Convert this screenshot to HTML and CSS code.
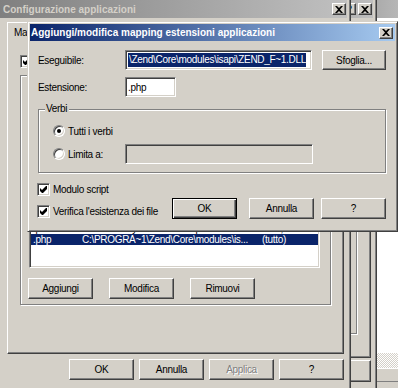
FILE: index.html
```html
<!DOCTYPE html>
<html lang="it">
<head>
  <meta charset="UTF-8">
  <title>Configurazione applicazioni</title>
  <link rel="stylesheet" href="styles.css">
</head>
<body>
<div class="desk">

  <!-- console IIS dietro a tutto -->
  <div class="win win-c">
    <div class="cap off"><span class="cap-title">Gestione IIS</span></div>
    <div class="c-client"></div>
    <div class="c-scroll"></div>
    <div class="c-status"></div>
  </div>

  <!-- proprieta del sito -->
  <div class="win win-b">
    <div class="cap off">
      <span class="cap-title">Proprietà</span>
      <button class="cbtn">?</button>
      <button class="cbtn"><svg width="8" height="7" viewBox="0 0 8 7"><path d="M0 0h2l2 2 2-2h2L5 3.5 8 7H6L4 5 2 7H0l3-3.5z"/></svg></button>
    </div>
    <div class="b-body">
      <div class="page b-page"><div class="group b-group"></div></div>
      <div class="b-foot"><button class="btn">OK</button></div>
    </div>
  </div>

  <!-- configurazione applicazioni -->
  <div class="win win-main">
    <div class="cap off">
      <span class="cap-title">Configurazione applicazioni</span>
      <button class="cbtn"><svg width="8" height="7" viewBox="0 0 8 7"><path d="M0 0h2l2 2 2-2h2L5 3.5 8 7H6L4 5 2 7H0l3-3.5z"/></svg></button>
    </div>
    <div class="main-body">
      <div class="tabs"><div class="tab">Mapping</div></div>
      <div class="page main-page">
        <label class="chk-row">
          <span class="chk"><svg width="7" height="7" viewBox="0 0 7 7"><path d="M0 2l2 2 4-4h1v3L3 7H2L0 5z"/></svg></span>
          Memorizza nella cache le estensioni ISAPI
        </label>
        <div class="group map-group">
          <span class="group-label">Mapping estensioni applicazioni</span>
          <div class="list">
            <div class="lhead">
              <span class="c1">Estensione</span>
              <span class="c2">Percorso eseguibile</span>
              <span class="c3">Verbi</span>
            </div>
            <div class="row"><span class="c1">.asa</span><span class="c2">C:\WINNT\System32\inetsrv\asp.dll</span><span class="c3">GET,HEAD,POST,TRACE</span></div>
            <div class="row"><span class="c1">.asp</span><span class="c2">C:\WINNT\System32\inetsrv\asp.dll</span><span class="c3">GET,HEAD,POST,TRACE</span></div>
            <div class="row"><span class="c1">.cdx</span><span class="c2">C:\WINNT\System32\inetsrv\asp.dll</span><span class="c3">GET,HEAD,POST,TRACE</span></div>
            <div class="row"><span class="c1">.cer</span><span class="c2">C:\WINNT\System32\inetsrv\asp.dll</span><span class="c3">GET,HEAD,POST,TRACE</span></div>
            <div class="row"><span class="c1">.htr</span><span class="c2">C:\WINNT\System32\inetsrv\ism.dll</span><span class="c3">GET,POST</span></div>
            <div class="row"><span class="c1">.idc</span><span class="c2">C:\WINNT\System32\inetsrv\httpodbc.dll</span><span class="c3">OPTIONS,GET,HEAD</span></div>
            <div class="row"><span class="c1">.shtm</span><span class="c2">C:\WINNT\System32\inetsrv\ssinc.dll</span><span class="c3">GET,POST</span></div>
            <div class="row"><span class="c1">.shtml</span><span class="c2">C:\WINNT\System32\inetsrv\ssinc.dll</span><span class="c3">GET,POST</span></div>
            <div class="row"><span class="c1">.stm</span><span class="c2">C:\WINNT\System32\inetsrv\ssinc.dll</span><span class="c3">GET,POST</span></div>
            <div class="row"><span class="c1">.printer</span><span class="c2">C:\WINNT\system32\msw3prt.dll</span><span class="c3">GET,POST</span></div>
            <div class="row sel"><span class="c1">.php</span><span class="c2">C:\PROGRA~1\Zend\Core\modules\is...</span><span class="c3">(tutto)</span></div>
          </div>
          <div class="list-btns">
            <button class="btn">Aggiungi</button>
            <button class="btn">Modifica</button>
            <button class="btn">Rimuovi</button>
          </div>
        </div>
      </div>
      <div class="main-foot">
        <button class="btn">OK</button>
        <button class="btn">Annulla</button>
        <button class="btn" disabled>Applica</button>
        <button class="btn">?</button>
      </div>
    </div>
  </div>

  <!-- finestra modale -->
  <div class="win dlg">
    <div class="cap">
      <span class="cap-title">Aggiungi/modifica mapping estensioni applicazioni</span>
      <button class="cbtn"><svg width="8" height="7" viewBox="0 0 8 7"><path d="M0 0h2l2 2 2-2h2L5 3.5 8 7H6L4 5 2 7H0l3-3.5z"/></svg></button>
    </div>
    <div class="dlg-body">
      <div class="frow">
        <span class="flabel">Eseguibile:</span>
        <div class="edit edit-exe"><span class="picked">\Zend\Core\modules\isapi\ZEND_F~1.DLL</span></div>
        <button class="btn btn-browse">Sfoglia...</button>
      </div>
      <div class="frow">
        <span class="flabel">Estensione:</span>
        <div class="edit edit-ext">.php</div>
      </div>
      <div class="group verbi">
        <span class="group-label">Verbi</span>
        <label class="opt"><span class="radio on"></span>Tutti i verbi</label>
        <label class="opt"><span class="radio"></span><span class="opt-limit">Limita a:</span><div class="edit off edit-verbs"></div></label>
      </div>
      <label class="chk-row dlg-chk">
        <span class="chk"><svg width="7" height="7" viewBox="0 0 7 7"><path d="M0 2l2 2 4-4h1v3L3 7H2L0 5z"/></svg></span>
        Modulo script
      </label>
      <div class="dlg-foot">
        <label class="chk-row dlg-chk">
          <span class="chk"><svg width="7" height="7" viewBox="0 0 7 7"><path d="M0 2l2 2 4-4h1v3L3 7H2L0 5z"/></svg></span>
          Verifica l'esistenza dei file
        </label>
        <button class="btn def ok">OK</button>
        <button class="btn cancel">Annulla</button>
        <button class="btn help">?</button>
      </div>
    </div>
  </div>

</div>
</body>
</html>
```

FILE: styles.css
```css
* {
  box-sizing: border-box;
}
body {
  margin: 0;
  font-family: "Liberation Sans", Arial, sans-serif;
  font-size: 10px;
  letter-spacing: -0.3px;
  color: #000;
  background: #fff;
}
.desk {
  position: relative;
  width: 398px;
  height: 388px;
  overflow: hidden;
  background: #fff;
}

/* finestre stile classico */
.win {
  position: absolute;
  display: flex;
  flex-direction: column;
  padding: 3px;
  background: #d4d0c8;
  border: 1px solid;
  border-color: #d4d0c8 #404040 #404040 #d4d0c8;
  box-shadow: inset 1px 1px #fff, inset -1px -1px #808080;
}
.win-c { z-index: 1; left: 290px; top: -4px; width: 130px; height: 420px; }
.win-b { z-index: 2; left: 250px; top: -4px; width: 127px; height: 420px; }
.win-main { z-index: 3; left: -4px; top: -4px; width: 355px; height: 420px; }
.dlg { z-index: 4; left: 27px; top: 21px; width: 371px; height: 211px; padding: 2px; }

.cap {
  flex: none;
  display: flex;
  align-items: center;
  gap: 2px;
  height: 18px;
  padding: 0 1px 0 3px;
  color: #fff;
  font-weight: bold;
  letter-spacing: 0;
  background: linear-gradient(to right, #0a246a, #a6caf0);
}
.cap.off {
  color: #d4d0c8;
  background: linear-gradient(to right, #808080, #c0c0c0);
}
.dlg .cap {
  height: 17px;
  padding: 0 2px 0 1px;
}
.cap-title {
  flex: 1;
  overflow: hidden;
  white-space: nowrap;
}
.cbtn {
  flex: none;
  display: flex;
  align-items: center;
  justify-content: center;
  width: 14px;
  height: 12px;
  padding: 0;
  font: bold 10px "Liberation Sans", Arial, sans-serif;
  color: #000;
  background: #d4d0c8;
  border: 1px solid;
  border-color: #fff #404040 #404040 #fff;
  box-shadow: inset -1px -1px #808080;
}

/* controlli */
.btn {
  flex: none;
  width: 65px;
  height: 21px;
  padding: 0;
  font: inherit;
  letter-spacing: inherit;
  color: #000;
  background: #d4d0c8;
  border: 1px solid;
  border-color: #fff #404040 #404040 #fff;
  box-shadow: inset -1px -1px #808080, inset 1px 1px #d4d0c8;
}
.btn.def {
  border-color: #000;
  box-shadow: inset 1px 1px #fff, inset -1px -1px #404040, inset -2px -2px #808080;
}
.btn:disabled {
  color: #808080;
  text-shadow: 1px 1px #fff;
}
.edit {
  display: flex;
  align-items: center;
  height: 20px;
  padding: 0 2px;
  overflow: hidden;
  white-space: nowrap;
  background: #fff;
  border: 1px solid;
  border-color: #808080 #fff #fff #808080;
  box-shadow: inset 1px 1px #404040, inset -1px -1px #d4d0c8;
}
.edit.off {
  background: #d4d0c8;
}
.picked {
  padding: 1px 0 2px 1px;
  color: #fff;
  background: #0a246a;
}
.group {
  position: relative;
  border: 1px solid #808080;
  box-shadow: inset 1px 1px #fff, 1px 1px #fff;
}
.group-label {
  position: absolute;
  top: -7px;
  left: 6px;
  padding: 0 2px 0 1px;
  background: #d4d0c8;
}
.chk-row {
  display: flex;
  align-items: center;
  gap: 3px;
  height: 14px;
  white-space: nowrap;
}
.chk {
  flex: none;
  width: 13px;
  height: 13px;
  padding: 2px;
  background: #fff;
  border: 1px solid;
  border-color: #808080 #fff #fff #808080;
  box-shadow: inset 1px 1px #404040, inset -1px -1px #d4d0c8;
}
.chk svg {
  display: block;
}
.radio {
  position: relative;
  flex: none;
  width: 12px;
  height: 12px;
  border-radius: 50%;
  background: #fff;
  border: 1px solid;
  border-color: #808080 #fff #fff #808080;
  box-shadow: inset 1px 1px #404040, inset -1px -1px #d4d0c8;
}
.radio.on::after {
  content: "";
  position: absolute;
  left: 3px;
  top: 3px;
  width: 4px;
  height: 4px;
  border-radius: 50%;
  background: #000;
}

/* finestra console */
.c-client {
  flex: none;
  height: 335px;
  background: #fff;
}
.c-scroll {
  flex: none;
  height: 15px;
  background: repeating-conic-gradient(#fff 0 25%, #d4d0c8 0 50%) 0 0 / 2px 2px;
}
.c-status {
  flex: none;
  height: 14px;
  border-top: 1px solid #fff;
  border-bottom: 1px solid #808080;
}

/* finestra proprieta */
.b-body {
  flex: 1;
  padding-right: 2px;
}
.page {
  border: 1px solid;
  border-color: #fff #404040 #404040 #fff;
  box-shadow: inset -1px -1px #808080;
}
.b-page {
  height: 318px;
  margin-top: 22px;
  padding: 80px 13px 0 0;
}
.b-group {
  height: 213px;
}
.b-foot {
  display: flex;
  justify-content: flex-end;
  margin-top: 2px;
}
.b-foot .btn {
  height: 22px;
}

/* configurazione applicazioni */
.main-body {
  flex: 1;
  padding: 4px 3px 0 7px;
}
.tabs {
  position: relative;
  z-index: 1;
  display: flex;
  height: 19px;
  margin-bottom: -1px;
}
.tab {
  width: 54px;
  padding: 4px 0 0 6px;
  background: #d4d0c8;
  border: 1px solid;
  border-bottom: 0;
  border-color: #fff #404040 transparent #fff;
  box-shadow: inset -1px 0 #808080;
}
.main-page {
  height: 314px;
  padding: 13px 0 0 12px;
}
.map-group {
  width: 311px;
  height: 230px;
  margin-top: 7px;
  padding: 29px 10px 0 8px;
}
.list {
  height: 163px;
  padding: 1px;
  overflow: hidden;
  background: #fff;
  border: 1px solid;
  border-color: #808080 #fff #fff #808080;
  box-shadow: inset 1px 1px #404040, inset -1px -1px #d4d0c8;
}
.lhead,
.row {
  display: flex;
  white-space: nowrap;
}
.lhead {
  height: 17px;
}
.lhead span {
  display: flex;
  align-items: center;
  padding-left: 5px;
  background: #d4d0c8;
  border: 1px solid;
  border-color: #fff #404040 #404040 #fff;
  box-shadow: inset -1px -1px #808080;
}
.row {
  height: 11px;
  line-height: 11px;
}
.row.sel {
  color: #fff;
  background: #0a246a;
}
.c1 {
  flex: none;
  width: 51px;
  padding-left: 2px;
  overflow: hidden;
}
.c2 {
  flex: none;
  width: 180px;
  overflow: hidden;
}
.c3 {
  flex: 1;
  overflow: hidden;
}
.list-btns {
  display: flex;
  gap: 16px;
  margin: 10px 0 0 -1px;
}
.main-foot {
  display: flex;
  justify-content: flex-end;
  gap: 5px;
  margin-top: 5px;
}

/* dialogo aggiungi/modifica */
.dlg-body {
  flex: 1;
  padding: 9px 9px 0 8px;
}
.frow {
  display: flex;
  align-items: center;
  height: 20px;
}
.frow + .frow {
  margin-top: 7px;
}
.flabel {
  flex: none;
  width: 87px;
}
.edit-exe {
  width: 187px;
}
.btn-browse {
  width: 64px;
  height: 20px;
  margin-left: 10px;
}
.edit-ext {
  width: 51px;
}
.verbi {
  width: 348px;
  height: 64px;
  margin-top: 12px;
  padding: 11px 0 0 14px;
}
.opt {
  display: flex;
  align-items: center;
  gap: 3px;
  height: 20px;
}
.opt + .opt {
  margin-top: 3px;
}
.opt-limit {
  width: 54px;
}
.edit-verbs {
  width: 188px;
}
.dlg-chk {
  margin-top: 9px;
  margin-left: -1px;
}
.dlg-foot {
  display: flex;
  align-items: flex-end;
  height: 21px;
  margin-top: 2px;
}
.dlg-foot .dlg-chk {
  margin: 0 0 1px -1px;
}
.ok {
  margin-left: auto;
}
.cancel {
  margin-left: 12px;
}
.help {
  margin-left: 7px;
}
```
